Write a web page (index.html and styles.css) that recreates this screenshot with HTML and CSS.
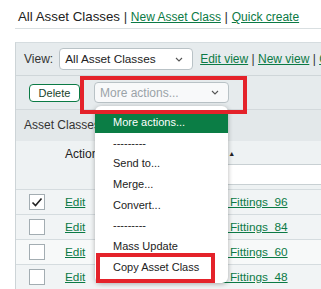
FILE: index.html
```html
<!DOCTYPE html>
<html lang="en">

<head>
    <meta charset="UTF-8">
    <meta name="viewport" content="width=device-width, initial-scale=1.0">
    <title>All Asset Classes</title>
    <link rel="stylesheet" href="styles.css">
</head>

<body>
    <div class="page">
        <h1 class="heading">All Asset Classes <span class="sep">|</span> <a href="#">New Asset Class</a> <span class="sep">|</span> <a href="#">Quick create</a></h1>

        <div class="panel">
            <div class="view-row">
                <span class="label">View:</span>
                <div class="select view-select">
                    <span>All Asset Classes</span>
                    <svg class="chevron" width="8" height="5" viewBox="0 0 8 5"><path d="M1 1l3 3 3-3" fill="none" stroke="#555" stroke-width="1.1"/></svg>
                </div>
                <span class="view-links"><a href="#">Edit view</a> | <a href="#">New view</a> | <a href="#">Customize</a></span>
            </div>

            <div class="action-row">
                <button class="delete-button">Delete</button>
                <div class="select more-select">
                    <span>More actions...</span>
                    <svg class="chevron" width="8" height="5" viewBox="0 0 8 5"><path d="M1 1l3 3 3-3" fill="none" stroke="#555" stroke-width="1.1"/></svg>
                </div>
            </div>

            <div class="band">Asset Classes</div>

            <div class="grid-head">
                <div></div>
                <div class="col-title">Action</div>
                <div class="col-title name-title">Name <span class="sort">&#9650;</span></div>
                <div></div>
                <div></div>
                <div class="filter-cell"><div class="filter"></div></div>
            </div>

            <div class="grid-row">
                <div><span class="checkbox"><svg width="12" height="10" viewBox="0 0 12 10"><path d="M1.5 5.5l3 3 6-7" fill="none" stroke="#222" stroke-width="1.6"/></svg></span></div>
                <div><a href="#">Edit</a></div>
                <div><a href="#">Pipe Fittings_96</a></div>
            </div>
            <div class="grid-row">
                <div><span class="checkbox"></span></div>
                <div><a href="#">Edit</a></div>
                <div><a href="#">Pipe Fittings_84</a></div>
            </div>
            <div class="grid-row plain">
                <div><span class="checkbox"></span></div>
                <div><a href="#">Edit</a></div>
                <div><a href="#">Pipe Fittings_60</a></div>
            </div>
            <div class="grid-row">
                <div><span class="checkbox"></span></div>
                <div><a href="#">Edit</a></div>
                <div><a href="#">Pipe Fittings_48</a></div>
            </div>
        </div>
    </div>

    <!-- open dropdown of the "More actions" select -->
    <ul class="menu">
        <li class="active">More actions...</li>
        <li>---------</li>
        <li>Send to...</li>
        <li>Merge...</li>
        <li>Convert...</li>
        <li>---------</li>
        <li>Mass Update</li>
        <li>Copy Asset Class</li>
    </ul>

    <!-- red highlight boxes -->
    <div class="mark mark-select"></div>
    <div class="mark mark-copy"></div>
</body>

</html>
```

FILE: styles.css
```css
body {
    font-family: "Liberation Sans", Arial, sans-serif;
    font-size: 12px;
    margin: 0;
    padding: 0;
    color: #333;
    background-color: #fff;
    overflow: hidden;
    width: 321px;
    height: 289px;
}

a {
    color: #0b7a45;
    text-decoration: underline;
}

.page {
    padding-left: 15px;
    width: 480px;
}

.heading {
    font-size: 13.3px;
    font-weight: normal;
    line-height: 16px;
    margin: 9px 0 0 0;
    padding: 0 0 3px 3px;
    border-bottom: 1px solid #d9dfe1;
    color: #222;
    white-space: nowrap;
}

.heading a {
    font-size: 12px;
}

.heading .sep {
    color: #333;
}

.panel {
    margin-top: 13px;
    background-color: #e6ebed;
    border-left: 1px solid #cdd4d7;
    border-top: 1px solid #d5dcdf;
}

.view-row {
    display: flex;
    align-items: center;
    height: 32px;
    padding-left: 8px;
    border-bottom: 1px solid #cfd6d9;
    white-space: nowrap;
}

.label {
    margin-right: 6px;
}

.select {
    display: flex;
    align-items: center;
    justify-content: space-between;
    box-sizing: border-box;
    border: 1px solid #b9c2c6;
    border-radius: 4px;
    padding: 0 9px 0 5px;
}

.view-select {
    width: 134px;
    height: 22px;
    background-color: #fff;
    color: #222;
    margin-right: 7px;
    font-size: 11.8px;
}

.view-links a {
    color: #0b7a45;
}

.action-row {
    display: flex;
    align-items: center;
    height: 33px;
    padding-left: 13px;
    border-bottom: 1px solid #d3d9dc;
}

.delete-button {
    font-family: inherit;
    font-size: 11px;
    width: 51px;
    height: 18px;
    padding: 0;
    background-color: #fff;
    color: #17422c;
    border: 1px solid #0b7a45;
    border-radius: 4px;
    margin-right: 14px;
}

.more-select {
    width: 135px;
    height: 21px;
    background-color: #f8f9fa;
    color: #9aa3a8;
}

.band {
    height: 31px;
    line-height: 31px;
    padding-left: 8px;
    background-color: #e3e8ea;
}

.grid-head,
.grid-row {
    display: grid;
    grid-template-columns: 49px 128px 1fr;
}

.grid-head {
    background-color: #eef2f3;
    border-bottom: 1px solid #d5dcdf;
    padding-bottom: 4px;
}

.col-title {
    color: #222;
    line-height: 14px;
    padding-top: 6px;
}

.sort {
    font-size: 7px;
    vertical-align: 2px;
}

.filter-cell {
    padding: 3px 2px 0 0;
}

.filter {
    height: 21px;
    box-sizing: border-box;
    background-color: #fff;
    border: 1px solid #c8d0d3;
    border-radius: 4px;
}

.grid-row {
    height: 24px;
    align-items: center;
    border-bottom: 1px solid #d5dcdf;
    background-color: #f1f4f5;
    white-space: nowrap;
    font-size: 11.8px;
}

.grid-row.plain {
    background-color: #f7f9f9;
}

.checkbox {
    display: flex;
    align-items: center;
    justify-content: center;
    box-sizing: border-box;
    width: 16px;
    height: 16px;
    margin-left: 13px;
    background-color: #fff;
    border: 1px solid #a3adb2;
}

.grid-row > div:nth-child(3) {
    padding-left: 10px;
}

.menu {
    position: absolute;
    left: 95px;
    top: 106px;
    width: 133px;
    margin: 0;
    padding: 6px 0 5px 0;
    list-style: none;
    background-color: #fff;
    border-radius: 6px;
    box-shadow: 0 1px 5px rgba(0, 0, 0, 0.3);
    font-size: 11px;
}

.menu li {
    height: 20.7px;
    line-height: 20.7px;
    padding-left: 18px;
    color: #222;
}

.menu li.active {
    background-color: #0b7d45;
    color: #fff;
}

.mark {
    position: absolute;
    border: 4px solid #e4222a;
    box-sizing: border-box;
}

.mark-select {
    left: 80px;
    top: 76px;
    width: 167px;
    height: 38px;
}

.mark-copy {
    left: 96px;
    top: 253px;
    width: 119px;
    height: 30px;
}
```
